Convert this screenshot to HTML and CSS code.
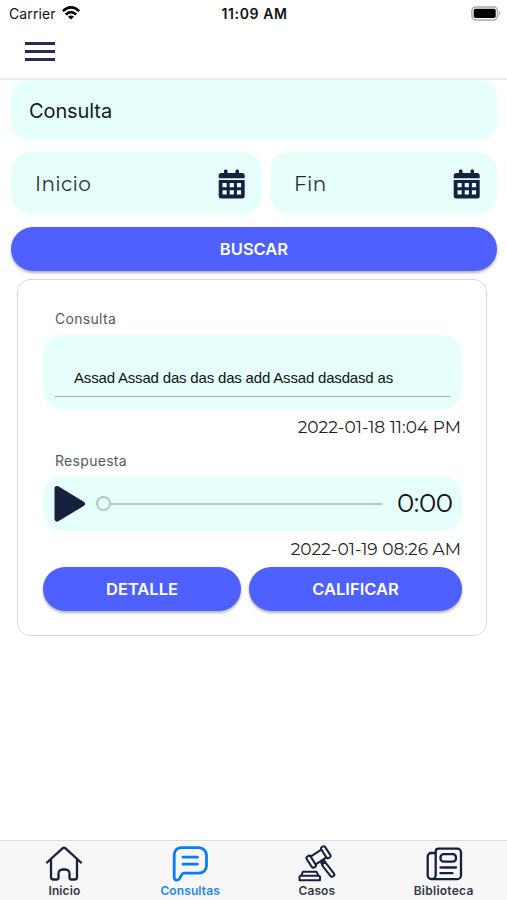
FILE: index.html
```html
<!DOCTYPE html>
<html lang="es">
<head>
<meta charset="utf-8">
<meta name="viewport" content="width=device-width, initial-scale=1">
<title>Consultas</title>
<link rel="stylesheet" href="styles.css">
</head>
<body>
<svg width="0" height="0" class="defs" aria-hidden="true">
  <symbol id="calendar" viewBox="0 0 28 30">
    <path d="M6 1.700C6 0 9.500 0 9.500 1.700V4h8V1.700C17.500 0 21 0 21 1.700V4h3a2.700 2.700 0 0 1 2.700 2.700V9.200H.7V6.700A2.700 2.700 0 0 1 3.400 4H6Z"/>
    <path fill-rule="evenodd" d="M.7 11h26v16a2.500 2.500 0 0 1-2.500 2.500h-21A2.500 2.500 0 0 1 .7 27ZM4.500 14v4.200h4.200v-4.200Zm7.200 0v4.200h4.200v-4.200Zm7.200 0v4.200h4.200v-4.200ZM4.500 21.300v4.200h4.200v-4.200Zm7.200 0v4.200h4.200v-4.200Zm7.200 0v4.200h4.200v-4.200Z"/>
  </symbol>
</svg>
<div class="app">
  <header>
    <div class="status">
      <div class="carrier"><span>Carrier</span>
        <svg width="18" height="14" viewBox="0 0 18 14" fill="none" stroke="#000" stroke-width="2.500"><path d="M.8 5.200Q9-2.500 17.200 5.200M3.800 8.500Q9 3.700 14.200 8.500"/><path d="M6 10.800Q9 8.100 12 10.800L9 13.600Z" fill="#000" stroke="none"/></svg>
      </div>
      <div class="clock">11:09 AM</div>
      <svg class="battery" width="31" height="15" viewBox="0 0 31 15"><rect x=".9" y=".9" width="25.600" height="13" rx="3.800" fill="#fff" stroke="#aaa" stroke-width="1.500"/><rect x="2.700" y="2.700" width="22" height="9.400" rx="1.800"/><path d="M28 5.200q2.500 2.200 0 4.400Z" fill="#aaa"/></svg>
    </div>
    <div class="menu"><i></i><i></i><i></i></div>
  </header>
  <main>
    <div class="field query">Consulta</div>
    <div class="dates">
      <div class="field date start"><span>Inicio</span><svg width="28" height="30"><use href="#calendar"/></svg></div>
      <div class="field date end"><span>Fin</span><svg width="28" height="30"><use href="#calendar"/></svg></div>
    </div>
    <button class="btn search">BUSCAR</button>
    <section class="card">
      <div class="label">Consulta</div>
      <div class="field message"><p>Assad Assad das das das add Assad dasdasd as</p></div>
      <div class="stamp first">2022-01-18 11:04 PM</div>
      <div class="label answer">Respuesta</div>
      <div class="field player">
        <svg width="33" height="38" viewBox="0 0 33 38"><path d="M3 3.500 28.500 18.800 3 34Z" fill="#18203f" stroke="#18203f" stroke-width="5" stroke-linejoin="round"/></svg>
        <i class="knob"></i><i class="track"></i><span class="time">0:00</span>
      </div>
      <div class="stamp second">2022-01-19 08:26 AM</div>
      <div class="actions"><button class="btn detail">DETALLE</button><button class="btn rate">CALIFICAR</button></div>
    </section>
  </main>
  <nav>
    <a class="tab home"><svg width="38" height="38" viewBox="0 0 38 38"><path d="M2 17.500 17.500 3.300a2.200 2.200 0 0 1 3 0L36 17.500M6 14.500v17.500a2.500 2.500 0 0 0 2.500 2.500h3a2 2 0 0 0 2-2v-4a4 4 0 0 1 4-4h3a4 4 0 0 1 4 4v4a2 2 0 0 0 2 2h3a2.500 2.500 0 0 0 2.500-2.500V14.500"/></svg><span>Inicio</span></a>
    <a class="tab active"><svg width="38" height="38" viewBox="0 0 38 38"><path d="M10 2.700h18a7.500 7.500 0 0 1 7.500 7.500v10.500a7.500 7.500 0 0 1-7.500 7.500H13.200c-1.600 0-2.300 1-3.200 2.700l-1.300 2.500c-1.700 2.900-5.500 2-5.500-1.200V9.700a7 7 0 0 1 6.800-7ZM12 12.200h14.500M12 19.200h14.500"/></svg><span>Consultas</span></a>
    <a class="tab"><svg class="fine" width="38" height="38" viewBox="0 0 38 38"><g transform="translate(20.500 12) rotate(-33)"><rect x="-11" y="-6.500" width="4.600" height="13" rx="1.900"/><rect x="6.400" y="-6.500" width="4.600" height="13" rx="1.900"/><path d="M-6.400-4.700H6.400M-6.400 4.700H6.400"/></g><path d="m23 17.500 3-2.500 1.300 1.800-3 2.500Z"/><rect x="-2.200" y="0" width="4.400" height="16.500" rx="2" transform="translate(25.200 18.200) rotate(-38)"/><path d="M5 26.700h13.500l1.800 4H3.200ZM3 30.700h17.500a1.500 1.500 0 0 1 1.500 1.500v3H1.500v-3A1.500 1.500 0 0 1 3 30.700Z"/></svg><span>Casos</span></a>
    <a class="tab"><svg width="38" height="38" viewBox="0 0 38 38"><path d="M13.500 3.700h18.700a3.800 3.800 0 0 1 3.800 3.800v22.700a4 4 0 0 1-4 4H6.700a4 4 0 0 1-4-4V11.500a3.500 3.500 0 0 1 3.500-3.500h4.300M10.700 6.500v23.700c0 5-8 5-8 0M10.700 8V6.500a2.800 2.800 0 0 1 2.800-2.800"/><rect x="15.500" y="9.200" width="15.500" height="7.500" rx="3.200"/><path d="M15.500 22.500H31M15.500 28.200h12"/></svg><span class="library">Biblioteca</span></a>
  </nav>
</div>
</body>
</html>
```
FILE: styles.css
```css
* { box-sizing: border-box; }
body { margin: 0; background: #fff; color: #111; font-family: Inter, "Liberation Sans", sans-serif; }
.defs { display: block; position: absolute; }
svg { display: block; flex: none; }
p { margin: 0; }
.app { height: 900px; display: flex; flex-direction: column; overflow: hidden; }
header { height: 80px; border-bottom: 2px solid #ececee; flex: none; }
.status { height: 27px; display: grid; grid-template-columns: 1fr auto 1fr; align-items: center; padding: 0 7px 0 9px; }
.carrier { display: flex; align-items: center; gap: 6px; font-size: 14px; letter-spacing: .1px; white-space: nowrap; }
.carrier svg { margin-top: -2px; }
.clock { font-size: 14px; font-weight: 600; letter-spacing: .6px; }
.battery { justify-self: end; margin: -1px -2px 0 0; }
.menu { width: 30px; margin: 15px 0 0 25px; display: flex; flex-direction: column; gap: 5px; }
.menu i { height: 3px; background: #282b52; }
main { flex: 1; padding: 0 10px 0 11px; }
.field { background: #e6fffd; border-radius: 20px; display: flex; align-items: center; }
.query { height: 60px; padding: 1px 0 0 18px; font-size: 20px; letter-spacing: -.1px; color: #10201f; border-radius: 18px; }
.dates { display: flex; gap: 8px; margin-top: 12px; }
.date { height: 62px; justify-content: space-between; font-size: 20px; color: #203030; }
.date span { font-family: Montserrat, Inter, sans-serif; letter-spacing: .35px; margin-top: 1px; }
.date svg { fill: #18203f; margin-top: 2px; }
.start { width: 251px; padding: 0 16px 0 24px; }
.end { width: 227px; padding: 0 16px 0 24px; }
.btn { display: block; border: 0; padding: 0; color: #fff; background: #4e60ff; border-radius: 22px; height: 44px; font: 600 16.500px Inter, sans-serif; box-shadow: 0 2px 3px rgba(0,0,0,.3); }
.search { width: 100%; margin-top: 13px; }
.card { width: 470px; height: 357px; margin: 8px 0 0 6px; padding: 28px 24px 0 25px; border: 1.500px solid #d8d8da; border-radius: 13px; }
.label { height: 20px; line-height: 22px; padding-left: 12px; font-size: 14px; color: #545a60; letter-spacing: .3px; }
.message { height: 74px; margin-top: 7px; padding: 24px 12px 0; align-items: flex-start; }
.message p { width: 100%; height: 38px; padding-left: 19px; border-bottom: 1.500px solid #9aafaf; font: 15px/38px "Liberation Sans", sans-serif; letter-spacing: -.18px; white-space: nowrap; }
.stamp { height: 24px; line-height: 25px; text-align: right; font-family: Montserrat, Inter, sans-serif; font-size: 17px; letter-spacing: .03px; padding-right: 1px; color: #222; white-space: nowrap; }
.first { margin-top: 6px; }
.answer { margin-top: 11px; }
.player { height: 55px; margin-top: 6px; padding: 0 9px 0 11px; }
.knob { width: 15px; height: 15px; border: 2px solid #b3c6c5; border-radius: 50%; margin-left: 9px; flex: none; }
.track { flex: 1; height: 2px; background: #b3c6c5; margin-right: 15px; }
.time { width: 56px; font: 400 26px Montserrat, Inter, sans-serif; letter-spacing: -.4px; margin-top: -1px; white-space: nowrap; }
.second { margin-top: 6px; }
.actions { display: flex; gap: 8px; margin-top: 6px; }
.detail { width: 198px; }
.rate { width: 213px; }
nav { height: 60px; flex: none; display: grid; grid-template-columns: repeat(4, 1fr); background: #f7f7f8; border-top: 1px solid #dcdcde; color: #18203f; }
.tab { display: flex; flex-direction: column; align-items: center; padding-top: 4px; font-size: 12px; font-weight: 600; }
.home { padding-left: 2px; }
.tab svg { fill: none; stroke: currentColor; stroke-width: 2.300; stroke-linejoin: round; stroke-linecap: round; }
.tab .fine { stroke-width: 2; }
.tab span { line-height: 14px; margin-top: 1px; color: #333744; letter-spacing: .1px; }
.tab .library { letter-spacing: .25px; }
.active { color: #087cff; }
.tab.active svg { stroke-width: 2.800; }
.tab.active span { color: #2588ef; }
```
